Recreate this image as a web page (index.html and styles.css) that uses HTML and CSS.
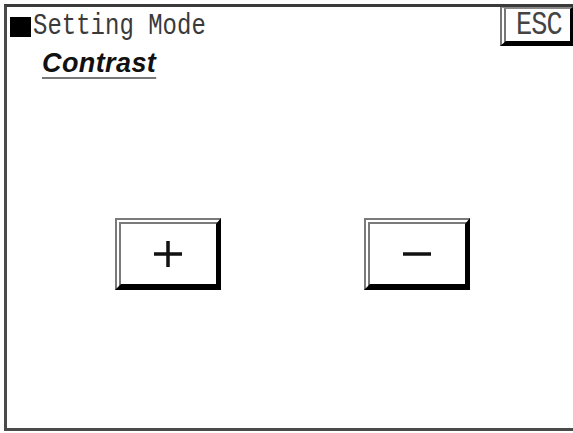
FILE: index.html
```html
<!DOCTYPE html>
<html lang="en">
    <head>
        <meta charset="UTF-8" />
        <meta name="viewport" content="width=device-width, initial-scale=1.0" />
        <title>Setting Mode - Contrast</title>
        <link rel="stylesheet" href="styles.css">
    </head>
    <body>
        <div class="screen">
            <div class="header">
                <div class="title-block">
                    <div class="title"><span class="mark"></span><span class="tall">Setting Mode</span></div>
                    <div class="subtitle">Contrast</div>
                </div>
                <button class="esc" type="button"><span class="tall">ESC</span></button>
            </div>

            <!-- Contrast controls -->
            <div class="controls">
                <button class="key" type="button" aria-label="Increase">
                    <svg width="30" height="28" viewBox="0 0 30 28">
                        <path d="M1 14 H29 M15 1 V27" stroke="#111" stroke-width="3.5" fill="none" />
                    </svg>
                </button>
                <button class="key" type="button" aria-label="Decrease">
                    <svg width="30" height="28" viewBox="0 0 30 28">
                        <path d="M1 14 H29" stroke="#111" stroke-width="3.5" fill="none" />
                    </svg>
                </button>
            </div>
        </div>
    </body>
</html>
```

FILE: styles.css
```css
body {
    margin: 0;
    padding: 0;
    background-color: #fff;
    font-family: "Liberation Mono", "DejaVu Sans Mono", monospace;
}
.screen {
    margin: 4px 0 0 4px;
    height: 421px;
    border-top: 3px solid #3a3a3a;
    border-left: 3px solid #4a4a4a;
    border-bottom: 3px solid #4a4a4a;
    background-color: #fff;
    display: flex;
    flex-direction: column;
}
.header {
    display: flex;
    justify-content: space-between;
    align-items: flex-start;
}
.title-block {
    padding: 10px 0 0 3px;
}
.title {
    display: flex;
    align-items: center;
    height: 20px;
    font-size: 24px;
    line-height: 20px;
    color: #3a3a3a;
}
.tall {
    display: inline-block;
    transform: scaleY(1.2);
}
.mark {
    display: inline-block;
    width: 21px;
    height: 20px;
    margin-right: 2px;
    background-color: #000;
}
.subtitle {
    margin: 14px 0 0 32px;
    font-family: "Liberation Sans", Arial, sans-serif;
    font-size: 27px;
    font-weight: bold;
    font-style: italic;
    line-height: 24px;
    letter-spacing: 0.4px;
    color: #111;
    text-decoration: underline;
    text-decoration-color: #777;
    text-decoration-thickness: 2px;
    text-underline-offset: 5px;
}
.esc {
    box-sizing: border-box;
    width: 73px;
    height: 39px;
    margin: 0;
    padding: 2px 0 0 10px;
    background-color: #fff;
    border-top: 2px solid #888;
    border-left: 6px double #777;
    border-right: 3px solid #000;
    border-bottom: 5px solid #000;
    font-family: "Liberation Mono", "DejaVu Sans Mono", monospace;
    font-size: 27px;
    line-height: 28px;
    letter-spacing: -1px;
    color: #444;
    text-align: left;
}
.controls {
    display: flex;
    justify-content: center;
    gap: 143px;
    margin-top: 143px;
    padding-left: 4px;
}
.key {
    box-sizing: border-box;
    width: 106px;
    height: 72px;
    margin: 0;
    padding: 0;
    background-color: #fff;
    border-top: 6px double #7a7a7a;
    border-left: 6px double #7a7a7a;
    border-right: 5px solid #000;
    border-bottom: 6px solid #000;
    display: flex;
    align-items: center;
    justify-content: center;
}
.key svg {
    display: block;
}
```
